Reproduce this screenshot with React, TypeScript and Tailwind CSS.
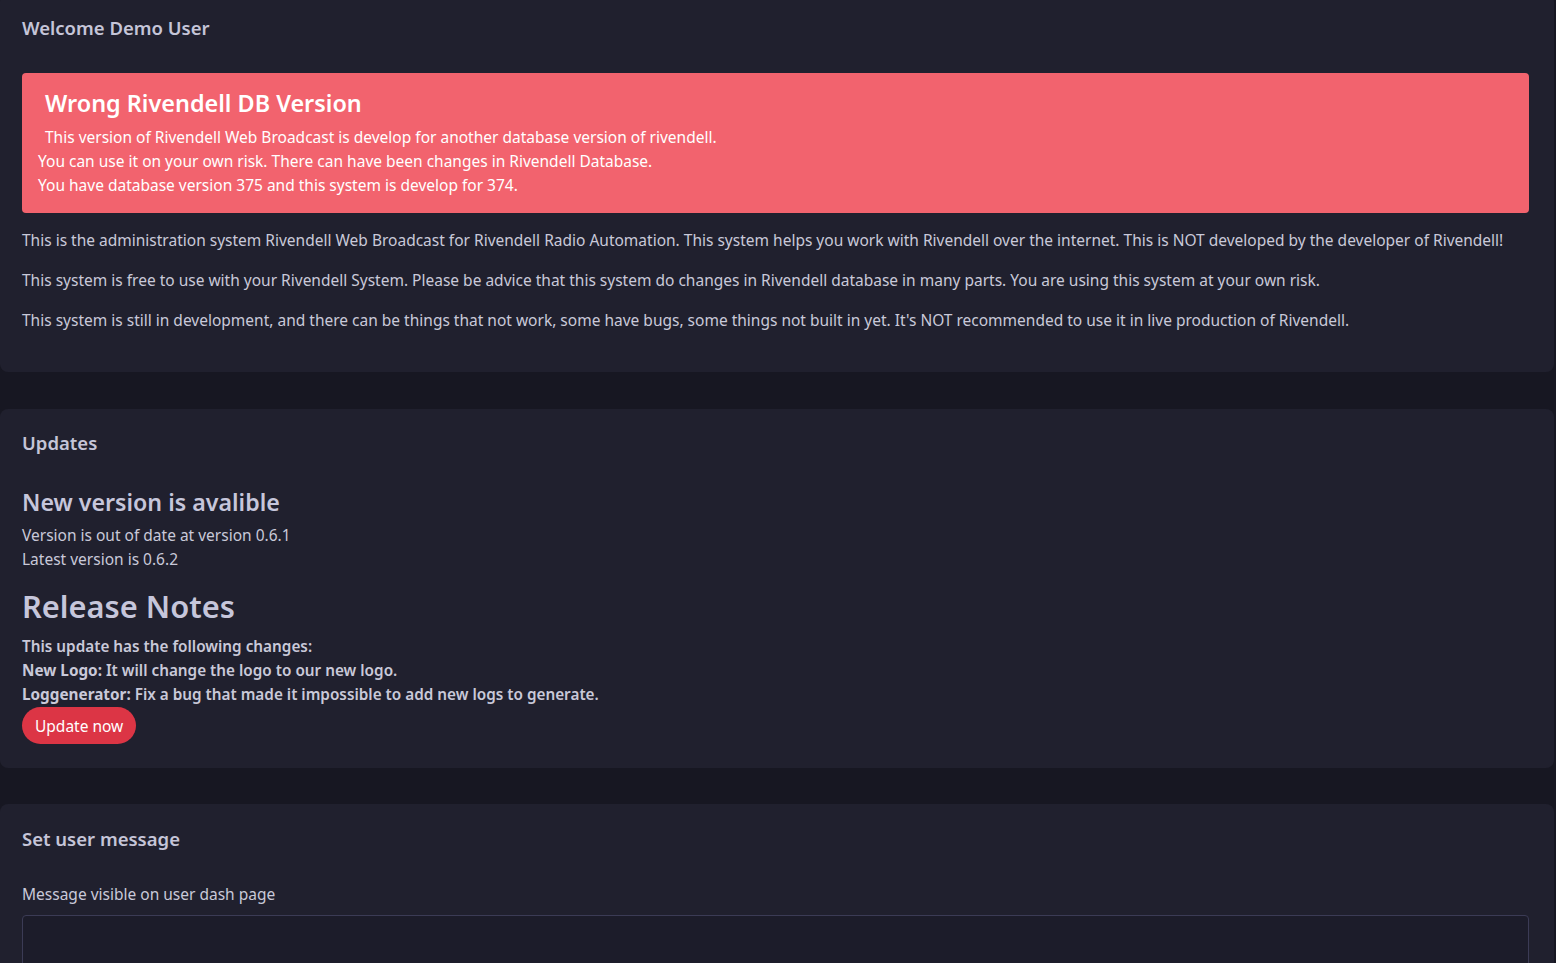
import { useState } from "react";

const font = { fontFamily: "'Noto Sans', Lato, sans-serif" };

function Card({
  title,
  children,
  className = "",
  top = "pt-[22px]",
}: {
  title: string;
  children: React.ReactNode;
  className?: string;
  top?: string;
}) {
  return (
    <section className={`mr-[2px] rounded-lg bg-[#20202e] pl-[22px] pr-[25px] ${top} ${className}`}>
      <h2 className="text-[18.5px] leading-6 font-semibold text-[#c5c5d8]">{title}</h2>
      {children}
    </section>
  );
}

export default function App() {
  const [message, setMessage] = useState("");

  return (
    <div style={font} className="min-h-screen overflow-hidden bg-[#171722] text-[15.5px] leading-6 text-[#c9c9d9]">
      <Card title="Welcome Demo User" className="-mt-[6px] pb-[40px]">
        <div className="mt-[33px] rounded bg-[#f2636e] pl-[16px] pr-4 pt-[16px] pb-[16px] text-white">
          <h3 className="pl-[7px] text-[23.4px] leading-[29px] font-semibold">Wrong Rivendell DB Version</h3>
          <div className="mt-[7px]">
            <p className="pl-[7px]">This version of Rivendell Web Broadcast is develop for another database version of rivendell.</p>
            <p>You can use it on your own risk. There can have been changes in Rivendell Database.</p>
            <p>You have database version 375 and this system is develop for 374.</p>
          </div>
        </div>
        <div className="mt-[15px] space-y-4">
          <p>
            This is the administration system Rivendell Web Broadcast for Rivendell Radio Automation. This system helps you work
            with Rivendell over the internet. This is NOT developed by the developer of Rivendell!
          </p>
          <p>
            This system is free to use with your Rivendell System. Please be advice that this system do changes in Rivendell
            database in many parts. You are using this system at your own risk.
          </p>
          <p>
            This system is still in development, and there can be things that not work, some have bugs, some things not built in
            yet. It's NOT recommended to use it in live production of Rivendell.
          </p>
        </div>
      </Card>

      <Card title="Updates" className="mt-[37px] pb-[24px]">
        <h3 className="mt-[33px] text-[23.2px] leading-[29px] font-semibold text-[#c6c6db]">New version is avalible</h3>
        <div className="mt-[6px]">
          <p>Version is out of date at version 0.6.1</p>
          <p>Latest version is 0.6.2</p>
        </div>
        <h3 className="mt-[16px] text-[30.8px] leading-[38px] font-semibold text-[#c6c6db]">Release Notes</h3>
        <div className="mt-[9px] text-[15.3px] font-semibold">
          <p>This update has the following changes:</p>
          <p>
            <b className="font-bold">New Logo:</b> It will change the logo to our new logo.
          </p>
          <p>
            <b className="font-bold">Loggenerator:</b> Fix a bug that made it impossible to add new logs to generate.
          </p>
        </div>
        <button
          type="button"
          className="mt-px h-[37px] rounded-full bg-[#dc3545] px-[13px] text-[15.5px] text-white hover:bg-[#c82333]"
        >
          Update now
        </button>
      </Card>

      <Card title="Set user message" top="pt-[23px]" className="mt-[36px] pb-[24px]">
        <label htmlFor="usermsg" className="mt-[31px] block">
          Message visible on user dash page
        </label>
        <textarea
          id="usermsg"
          value={message}
          onChange={(e) => setMessage(e.target.value)}
          rows={5}
          className="mt-[9px] block w-full rounded border border-[#3b3b55] bg-[#1c1c2a] px-3 py-2 text-[#c9c9d9] outline-none"
        />
      </Card>
    </div>
  );
}
